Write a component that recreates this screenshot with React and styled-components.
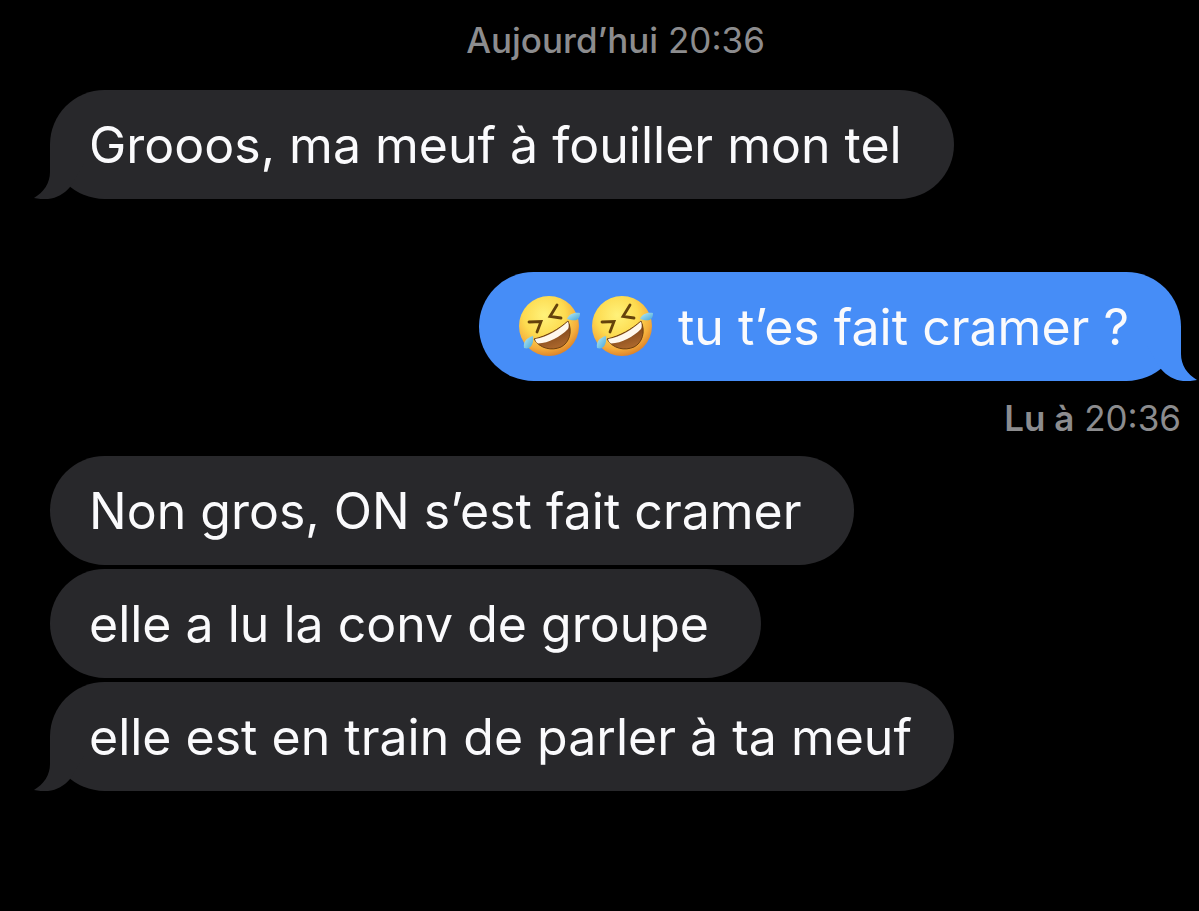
import React from 'react';
import styled, { createGlobalStyle } from 'styled-components';

const GlobalStyle = createGlobalStyle`
  body {
    margin: 0;
    background-color: #000;
    font-family: Inter, 'Liberation Sans', sans-serif;
  }
`;

const Conversation = styled.main`
  display: flex;
  flex-direction: column;
  box-sizing: border-box;
  min-height: 100vh;
  padding: 20px 18px 40px 50px;
`;

const Timestamp = styled.p`
  margin: ${(props) => (props.$read ? '17px 0 0' : '0')};
  align-self: ${(props) => (props.$read ? 'flex-end' : 'center')};
  font-size: 35px;
  line-height: 40px;
  color: #8c8c8e;
`;

const Label = styled.span`
  font-weight: ${(props) => (props.$bold ? 600 : 500)};
`;

const Group = styled.section`
  display: flex;
  flex-direction: column;
  gap: 4px;
  margin-top: ${(props) => props.$space}px;
  align-items: ${(props) => (props.$sent ? 'flex-end' : 'flex-start')};
`;

const Bubble = styled.div`
  position: relative;
  box-sizing: border-box;
  padding: 25px ${(props) => (props.$long ? 42 : 52)}px 24px 39px;
  border-radius: 55px;
  background-color: ${(props) => (props.$sent ? '#468df7' : '#28282b')};
  color: #fafafc;
  font-size: 50px;
  line-height: 60px;
`;

const TailShape = styled.svg`
  position: absolute;
  bottom: 0;
  width: 50px;
  height: 55px;
  fill: ${(props) => (props.$sent ? '#468df7' : '#28282b')};
  ${(props) => (props.$sent ? 'right: -16px; transform: scaleX(-1);' : 'left: -16px;')}
`;

const Text = styled.span`
  position: relative;
`;

const EmojiIcon = styled.svg`
  width: 64px;
  height: 64px;
  margin: -8px 9px -8px 0;
  vertical-align: -5px;
`;

const Tail = ({ sent }) => (
  <TailShape $sent={sent} viewBox="0 0 50 55" aria-hidden="true">
    <path d="M16 0V28C16 39 10 48 0 54C4 55 9 55 14 55C23 54 30 50 36 43L50 20V0Z" />
  </TailShape>
);

const Rofl = ({ id }) => (
  <EmojiIcon viewBox="0 0 64 64" role="img" aria-label="🤣">
    <defs>
      <radialGradient id={`${id}-face`} cx="0.42" cy="0.32" r="0.7">
        <stop offset="0" stopColor="#fff27a" />
        <stop offset="0.5" stopColor="#fddb50" />
        <stop offset="0.8" stopColor="#f5ae3c" />
        <stop offset="1" stopColor="#dc8129" />
      </radialGradient>
      <linearGradient id={`${id}-mouth`} x1="0" y1="0" x2="0.4" y2="1">
        <stop offset="0" stopColor="#5a2c0c" />
        <stop offset="1" stopColor="#a9652b" />
      </linearGradient>
      <linearGradient id={`${id}-tear`} x1="0" y1="0" x2="1" y2="1">
        <stop offset="0" stopColor="#b9ecf5" />
        <stop offset="1" stopColor="#45a6d8" />
      </linearGradient>
    </defs>
    <circle cx="31" cy="32" r="30" fill={`url(#${id}-face)`} />
    <path
      d="M16 45C29 42 41 35 50 27C55 38 51 49 43 53C34 57 22 55 16 45Z"
      fill={`url(#${id}-mouth)`}
      stroke="#70400f"
      strokeWidth="1"
    />
    <path d="M17 45C30 43 42 35 50 27.500C51 31 51 33 50 35C42 43 31 49 20 49.500C18 48 17.500 47 17 45Z" fill="#fff8ed" />
    <path
      d="M11 28L23 27.500L19 38M39 11L32 22.500L43 24"
      fill="none"
      stroke="#65420b"
      strokeWidth="2.800"
      strokeLinecap="round"
      strokeLinejoin="miter"
    />
    <path d="M49 25C51 20 56 18 62 19C62 26 58 28 49 25Z" fill={`url(#${id}-tear)`} />
    <path d="M15 42C8 44 5 48 6 54C12 56 16 51 15 42Z" fill={`url(#${id}-tear)`} />
  </EmojiIcon>
);

const Message = ({ sent, tail, long, children }) => (
  <Bubble $sent={sent} $long={long}>
    {tail && <Tail sent={sent} />}
    <Text>{children}</Text>
  </Bubble>
);

const App = () => {
  return (
    <>
      <GlobalStyle />
      <Conversation>
        <Timestamp>
          <Label>Aujourd’hui</Label> <time>20:36</time>
        </Timestamp>
        <Group $space={30}>
          <Message tail>Grooos, ma meuf à fouiller mon tel</Message>
        </Group>
        <Group $space={73} $sent>
          <Message sent tail>
            <Rofl id="rofl-1" />
            <Rofl id="rofl-2" /> tu t’es fait cramer ?
          </Message>
        </Group>
        <Timestamp $read>
          <Label $bold>Lu à</Label> <time>20:36</time>
        </Timestamp>
        <Group $space={18}>
          <Message>Non gros, ON s’est fait cramer</Message>
          <Message>elle a lu la conv de groupe</Message>
          <Message tail long>elle est en train de parler à ta meuf</Message>
        </Group>
      </Conversation>
    </>
  );
};

export default App;
